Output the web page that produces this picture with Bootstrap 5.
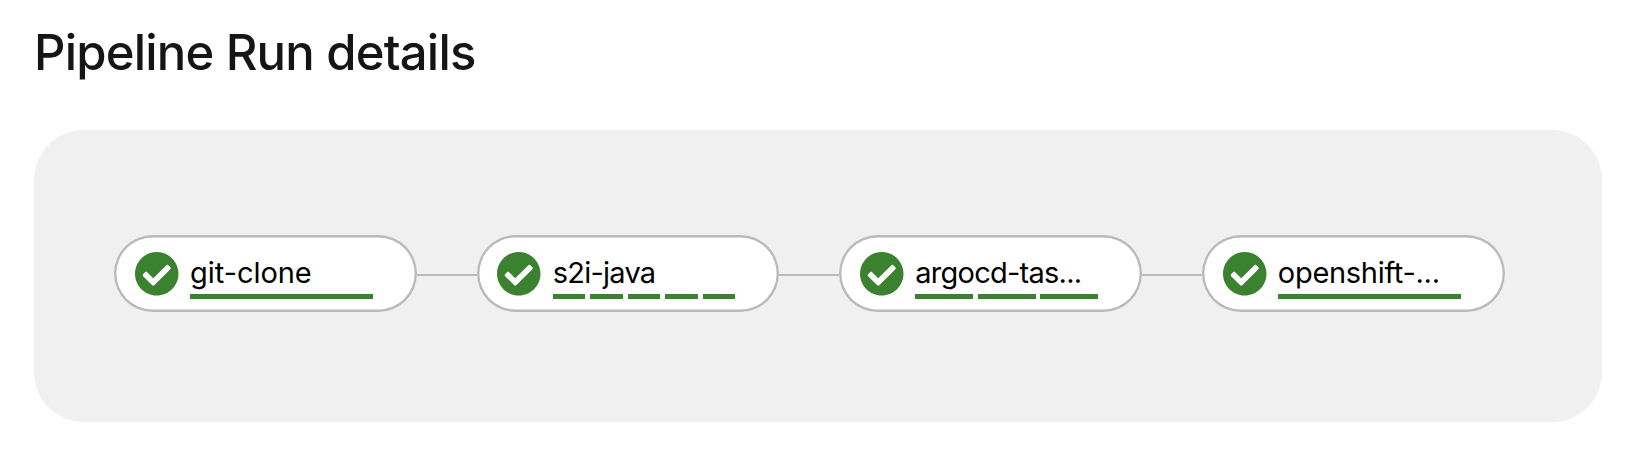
<!DOCTYPE html>
<html lang="en">
<head>
<meta charset="utf-8">
<meta name="viewport" content="width=device-width, initial-scale=1">
<title>Pipeline Run details</title>
<link href="https://cdn.jsdelivr.net/npm/bootstrap@5.3.0/dist/css/bootstrap.min.css" rel="stylesheet">
<style>
  body { font-family: Inter, "Liberation Sans", sans-serif; color: #151515; padding: 0 42px 0 34px; }
  .page-title { font-size: 49px; font-weight: 500; line-height: 60px; padding-top: 23px; margin: 0 0 47px; letter-spacing: -.8px; white-space: nowrap; }
  .pipeline { height: 292px; border-radius: 50px; background: #f0f0f0; padding: 104.7px 0 0 80.2px; }
  .task { width: 302.6px; height: 77.5px; box-shadow: inset 0 0 0 2.4px #b8babf; border-radius: 39px; background: #fff; padding: 17px 0 0 20.6px; }
  .link-line { width: 60px; height: 2px; background: #b8babf; margin-top: 39px; }
  .status { width: 43.5px; height: 43.5px; fill: #3a822f; overflow: visible; }
  .task-body { width: 182.8px; margin-left: 11.8px; }
  .task-name { font-size: 29px; line-height: 42px; height: 41.9px; color: #000; white-space: nowrap; }
  .name-git { letter-spacing: -.05px; }
  .name-s2i { letter-spacing: -.75px; }
  .name-argo { letter-spacing: -.75px; }
  .name-shift { letter-spacing: -.3px; }
  .step { height: 5px; background: #3a822f; }
  .steps { gap: 4.8px; }
</style>
</head>
<body>
<svg class="d-none" xmlns="http://www.w3.org/2000/svg">
  <symbol id="ok" viewBox="8 8 496 496" overflow="visible"><path d="M504 256c0 136.967-111.033 248-248 248S8 392.967 8 256 119.033 8 256 8s248 111.033 248 248zM227.314 387.314l184-184c6.248-6.248 6.248-16.379 0-22.627l-22.627-22.627c-6.248-6.249-16.379-6.249-22.628 0L216 308.118l-70.059-70.059c-6.248-6.248-16.379-6.248-22.628 0l-22.627 22.627c-6.248 6.248-6.248 16.379 0 22.627l104 104c6.249 6.249 16.379 6.249 22.628.001z"/></symbol>
</svg>
<h1 class="page-title">Pipeline Run details</h1>
<main class="pipeline d-flex align-items-start">
  <div class="task d-flex flex-shrink-0 align-items-start">
    <svg class="status flex-shrink-0"><use href="#ok"/></svg>
    <div class="task-body"><div class="task-name name-git">git-clone</div>
      <div class="steps d-flex"><div class="step flex-fill"></div></div></div>
  </div>
  <div class="link-line flex-shrink-0"></div>
  <div class="task d-flex flex-shrink-0 align-items-start">
    <svg class="status flex-shrink-0"><use href="#ok"/></svg>
    <div class="task-body"><div class="task-name name-s2i">s2i-java</div>
      <div class="steps d-flex"><div class="step flex-fill"></div><div class="step flex-fill"></div><div class="step flex-fill"></div><div class="step flex-fill"></div><div class="step flex-fill"></div></div></div>
  </div>
  <div class="link-line flex-shrink-0"></div>
  <div class="task d-flex flex-shrink-0 align-items-start">
    <svg class="status flex-shrink-0"><use href="#ok"/></svg>
    <div class="task-body"><div class="task-name name-argo">argocd-tas...</div>
      <div class="steps d-flex"><div class="step flex-fill"></div><div class="step flex-fill"></div><div class="step flex-fill"></div></div></div>
  </div>
  <div class="link-line flex-shrink-0"></div>
  <div class="task d-flex flex-shrink-0 align-items-start">
    <svg class="status flex-shrink-0"><use href="#ok"/></svg>
    <div class="task-body"><div class="task-name name-shift">openshift-...</div>
      <div class="steps d-flex"><div class="step flex-fill"></div></div></div>
  </div>
</main>
</body>
</html>
